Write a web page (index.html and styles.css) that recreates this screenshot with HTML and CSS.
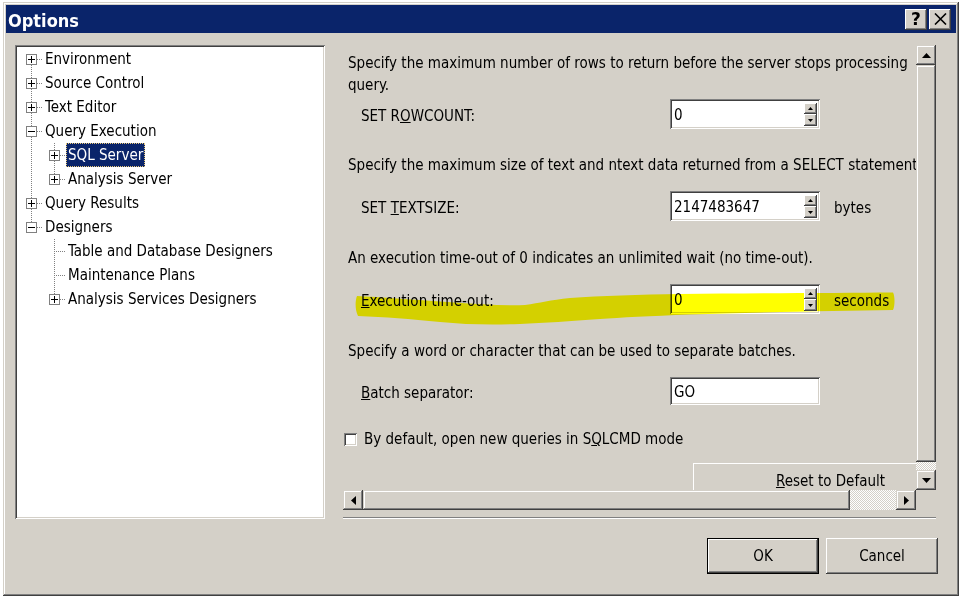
FILE: index.html
```html
<!DOCTYPE html>
<html lang="en">
<head>
    <meta charset="utf-8">
    <title>Options</title>
    <link rel="stylesheet" href="styles.css">
</head>
<body>
    <div class="window">
        <div class="titlebar">
            <span class="title">Options</span>
            <button class="caption-btn help">?</button>
            <button class="caption-btn close">
                <svg width="13" height="12" viewBox="0 0 13 12"><path d="M1 0.5 L12 11.5 M12 0.5 L1 11.5" stroke="#000" stroke-width="1.6"/></svg>
            </button>
        </div>

        <div class="dialog-body">
            <div class="main">
                <div class="tree">
                    <div class="tree-row">
                        <span class="node first"><span class="expander plus"></span></span>
                        <span class="label">Environment</span>
                    </div>
                    <div class="tree-row">
                        <span class="node mid"><span class="expander plus"></span></span>
                        <span class="label">Source Control</span>
                    </div>
                    <div class="tree-row">
                        <span class="node mid"><span class="expander plus"></span></span>
                        <span class="label">Text Editor</span>
                    </div>
                    <div class="tree-row">
                        <span class="node mid"><span class="expander minus"></span></span>
                        <span class="label">Query Execution</span>
                    </div>
                    <div class="tree-row">
                        <span class="guide line"></span>
                        <span class="node mid"><span class="expander plus"></span></span>
                        <span class="label selected">SQL Server</span>
                    </div>
                    <div class="tree-row">
                        <span class="guide line"></span>
                        <span class="node last"><span class="expander plus"></span></span>
                        <span class="label">Analysis Server</span>
                    </div>
                    <div class="tree-row">
                        <span class="node mid"><span class="expander plus"></span></span>
                        <span class="label">Query Results</span>
                    </div>
                    <div class="tree-row">
                        <span class="node last"><span class="expander minus"></span></span>
                        <span class="label">Designers</span>
                    </div>
                    <div class="tree-row">
                        <span class="guide"></span>
                        <span class="node mid"></span>
                        <span class="label">Table and Database Designers</span>
                    </div>
                    <div class="tree-row">
                        <span class="guide"></span>
                        <span class="node mid"></span>
                        <span class="label">Maintenance Plans</span>
                    </div>
                    <div class="tree-row">
                        <span class="guide"></span>
                        <span class="node last"><span class="expander plus"></span></span>
                        <span class="label">Analysis Services Designers</span>
                    </div>
                </div>

                <div class="pane">
                    <div class="pane-view">
                        <div class="pane-content">
                            <p class="desc">Specify the maximum number of rows to return before the server stops processing<br>query.</p>
                            <div class="setting-row first">
                                <span class="setting-label">SET R<u>O</u>WCOUNT:</span>
                                <div class="field spin">
                                    <span class="value">0</span>
                                    <div class="spin-buttons">
                                        <span class="spin-btn"><svg width="5" height="3"><polygon points="0,3 5,3 2.5,0"/></svg></span>
                                        <span class="spin-btn"><svg width="5" height="3"><polygon points="0,0 5,0 2.5,3"/></svg></span>
                                    </div>
                                </div>
                            </div>

                            <p class="desc">Specify the maximum size of text and ntext data returned from a SELECT statement.</p>
                            <div class="setting-row">
                                <span class="setting-label">SET <u>T</u>EXTSIZE:</span>
                                <div class="field spin">
                                    <span class="value">2147483647</span>
                                    <div class="spin-buttons">
                                        <span class="spin-btn"><svg width="5" height="3"><polygon points="0,3 5,3 2.5,0"/></svg></span>
                                        <span class="spin-btn"><svg width="5" height="3"><polygon points="0,0 5,0 2.5,3"/></svg></span>
                                    </div>
                                </div>
                                <span class="unit">bytes</span>
                            </div>

                            <p class="desc third">An execution time-out of 0 indicates an unlimited wait (no time-out).</p>
                            <div class="setting-row">
                                <span class="setting-label"><u>E</u>xecution time-out:</span>
                                <div class="field spin">
                                    <span class="value">0</span>
                                    <div class="spin-buttons">
                                        <span class="spin-btn"><svg width="5" height="3"><polygon points="0,3 5,3 2.5,0"/></svg></span>
                                        <span class="spin-btn"><svg width="5" height="3"><polygon points="0,0 5,0 2.5,3"/></svg></span>
                                    </div>
                                </div>
                                <span class="unit">seconds</span>
                            </div>

                            <p class="desc fourth">Specify a word or character that can be used to separate batches.</p>
                            <div class="setting-row short">
                                <span class="setting-label"><u>B</u>atch separator:</span>
                                <div class="field text">
                                    <span class="value">GO</span>
                                </div>
                            </div>

                            <label class="check-row">
                                <span class="checkbox"></span>
                                <span>By default, open new queries in S<u>Q</u>LCMD mode</span>
                            </label>

                            <button class="btn reset"><u>R</u>eset to Default</button>

                            <svg class="marker" width="573" height="445" viewBox="343 45 573 445">
                                <path d="M357,296 C380,297 415,300 455,302.5 C480,304 505,306 525,305 C540,303 550,300 570,298 C600,296 640,294.5 680,294 C760,293 840,293 893,292.5 C895,296 895,306 893,310 C840,311 760,312 690,314.5 C650,316 620,317.5 600,319 C570,321 545,323 520,324 C490,325 465,324.5 440,322 C410,319 385,317 358,316 C355,310 355,301 357,296 Z" fill="#ffff00"/>
                            </svg>
                        </div>

                        <div class="vscroll">
                            <span class="sb-btn"><svg width="9" height="5"><polygon points="0,5 9,5 4.5,0"/></svg></span>
                            <span class="sb-thumb"></span>
                            <span class="sb-track"></span>
                            <span class="sb-btn"><svg width="9" height="5"><polygon points="0,0 9,0 4.5,5"/></svg></span>
                        </div>

                        <div class="hscroll">
                            <span class="sb-btn"><svg width="5" height="9"><polygon points="5,0 5,9 0,4.5"/></svg></span>
                            <span class="sb-thumb"></span>
                            <span class="sb-track"></span>
                            <span class="sb-btn"><svg width="5" height="9"><polygon points="0,0 0,9 5,4.5"/></svg></span>
                        </div>
                        <div class="corner"></div>
                    </div>
                    <div class="separator"></div>
                </div>
            </div>

            <div class="footer">
                <button class="btn default">OK</button>
                <button class="btn">Cancel</button>
            </div>
        </div>
    </div>
</body>
</html>
```

FILE: styles.css
```css
body {
    margin: 0;
    padding: 2px 0 0 3px;
    width: 960px;
    height: 597px;
    box-sizing: border-box;
    overflow: hidden;
    background: #fff;
    font-family: "DejaVu Sans Condensed", "DejaVu Sans", sans-serif;
    font-stretch: semi-condensed;
    font-size: 15px;
    color: #000;
}

button {
    font: inherit;
    color: #000;
    border: none;
    padding: 0;
    cursor: default;
}

/* window frame */

.window {
    width: 956px;
    height: 594px;
    box-sizing: border-box;
    padding: 3px;
    background: #d4d0c8;
    box-shadow: inset -1px -1px #404040, inset 1px 1px #d4d0c8, inset -2px -2px #808080, inset 2px 2px #fff;
    display: flex;
    flex-direction: column;
}

.titlebar {
    height: 28px;
    flex: none;
    box-sizing: border-box;
    background: #0a246a;
    display: flex;
    align-items: center;
    gap: 2px;
    padding: 0 5px 0 2px;
}

.title {
    flex: 1;
    color: #fff;
    font-weight: bold;
    font-size: 18px;
    padding-top: 2px;
}

.caption-btn {
    width: 22px;
    height: 21px;
    background: #d4d0c8;
    box-shadow: inset -1px -1px #404040, inset 1px 1px #fff, inset -2px -2px #808080;
    display: flex;
    align-items: center;
    justify-content: center;
}

.caption-btn.help {
    font-family: "DejaVu Sans", sans-serif;
    font-stretch: normal;
    font-weight: bold;
    font-size: 17px;
    padding-bottom: 1px;
}

.dialog-body {
    flex: 1;
    padding: 12px 20px 0 9px;
}

.main {
    display: flex;
    gap: 18px;
    height: 474px;
}

/* tree */

.tree {
    width: 310px;
    box-sizing: border-box;
    padding: 2px 2px 2px 5px;
    background: #fff;
    box-shadow: inset 1px 1px #808080, inset -1px -1px #fff, inset 2px 2px #404040, inset -2px -2px #d4d0c8;
}

.tree-row {
    display: flex;
    height: 24px;
}

.guide,
.node {
    width: 23px;
    height: 24px;
    flex: none;
    background-repeat: no-repeat;
}

.guide.line {
    background-image: repeating-linear-gradient(to bottom, #808080 0 1px, transparent 1px 2px);
    background-size: 1px 24px;
    background-position: 11px 0;
}

.node.mid {
    background-image:
        repeating-linear-gradient(to bottom, #808080 0 1px, transparent 1px 2px),
        repeating-linear-gradient(to right, #808080 0 1px, transparent 1px 2px);
    background-size: 1px 24px, 12px 1px;
    background-position: 11px 0, 11px 12px;
}

.node.first {
    background-image:
        repeating-linear-gradient(to bottom, #808080 0 1px, transparent 1px 2px),
        repeating-linear-gradient(to right, #808080 0 1px, transparent 1px 2px);
    background-size: 1px 12px, 12px 1px;
    background-position: 11px 12px, 11px 12px;
}

.node.last {
    background-image:
        repeating-linear-gradient(to bottom, #808080 0 1px, transparent 1px 2px),
        repeating-linear-gradient(to right, #808080 0 1px, transparent 1px 2px);
    background-size: 1px 12px, 12px 1px;
    background-position: 11px 0, 11px 12px;
}

.expander {
    display: block;
    width: 11px;
    height: 11px;
    box-sizing: border-box;
    margin: 7px 0 0 6px;
    border: 1px solid #808080;
    background-color: #fff;
    background-repeat: no-repeat;
}

.expander.minus {
    background-image: linear-gradient(#000, #000);
    background-size: 7px 1px;
    background-position: 1px 4px;
}

.expander.plus {
    background-image: linear-gradient(#000, #000), linear-gradient(#000, #000);
    background-size: 7px 1px, 1px 7px;
    background-position: 1px 4px, 4px 1px;
}

.label {
    line-height: 23px;
    height: 22px;
    padding: 0 1px;
    border: 1px solid transparent;
    white-space: nowrap;
}

.label.selected {
    background: #0a246a;
    color: #fff;
    border: 1px dotted #e8c878;
}

/* right pane */

.pane {
    width: 593px;
    display: flex;
    flex-direction: column;
}

.pane-view {
    display: grid;
    grid-template-columns: 573px 20px;
    grid-template-rows: 445px 20px;
}

.pane-content {
    position: relative;
    overflow: hidden;
    padding: 7px 0 0 5px;
    white-space: nowrap;
}

.desc {
    margin: 25px 0 0;
    line-height: 22px;
}

.pane-content .desc:first-child {
    margin-top: 0;
}

.desc.third,
.desc.fourth {
    margin-top: 26px;
}

.setting-row {
    display: flex;
    align-items: center;
    height: 30px;
    margin-top: 15px;
}

.setting-row.first {
    margin-top: 3px;
}

.setting-row.short {
    height: 28px;
}

.setting-label {
    width: 309px;
    margin-left: 13px;
    padding-top: 3px;
}

.field {
    width: 150px;
    height: 100%;
    box-sizing: border-box;
    background: #fff;
    box-shadow: inset 1px 1px #808080, inset -1px -1px #fff, inset 2px 2px #404040, inset -2px -2px #d4d0c8;
    display: flex;
    align-items: center;
    padding: 2px 3px 1px 4px;
}

.field .value {
    flex: 1;
}

.spin-buttons {
    position: relative;
    z-index: 2;
    width: 13px;
    display: flex;
    flex-direction: column;
}

.spin-btn {
    height: 11px;
    background: #d4d0c8;
    box-shadow: inset -1px -1px #404040, inset 1px 1px #fff, inset -2px -2px #808080;
    display: flex;
    align-items: center;
    justify-content: center;
}

.spin-btn + .spin-btn {
    height: 12px;
}

.unit {
    margin-left: 14px;
    padding-top: 3px;
}

.check-row {
    display: flex;
    align-items: center;
    gap: 7px;
    margin: 23px 0 0 -4px;
    line-height: 22px;
}

.checkbox {
    width: 13px;
    height: 13px;
    background: #fff;
    box-shadow: inset 1px 1px #808080, inset -1px -1px #fff, inset 2px 2px #404040, inset -2px -2px #d4d0c8;
}

.marker {
    position: absolute;
    left: 0;
    top: 0;
    z-index: 1;
    mix-blend-mode: multiply;
    pointer-events: none;
}

/* scrollbars */

.vscroll,
.hscroll {
    display: flex;
}

.vscroll {
    flex-direction: column;
}

.sb-btn {
    flex: none;
    width: 20px;
    height: 20px;
    box-sizing: border-box;
    background: #d4d0c8;
    box-shadow: inset -1px -1px #404040, inset 1px 1px #d4d0c8, inset -2px -2px #808080, inset 2px 2px #fff;
    display: flex;
    align-items: center;
    justify-content: center;
}

.sb-thumb {
    background: #d4d0c8;
    box-shadow: inset -1px -1px #404040, inset 1px 1px #d4d0c8, inset -2px -2px #808080, inset 2px 2px #fff;
}

.vscroll .sb-thumb {
    height: 397px;
}

.hscroll .sb-thumb {
    width: 487px;
}

.sb-track {
    flex: 1;
    background: repeating-conic-gradient(#fff 0 25%, #d4d0c8 0 50%) 0 0 / 2px 2px;
}

.separator {
    margin-top: 7px;
    height: 2px;
    box-sizing: border-box;
    border-top: 1px solid #808080;
    border-bottom: 1px solid #fff;
}

/* buttons */

.btn {
    width: 112px;
    height: 36px;
    background: #d4d0c8;
    box-shadow: inset -1px -1px #404040, inset 1px 1px #fff, inset -2px -2px #808080, inset 2px 2px #d4d0c8;
}

.btn.default {
    box-shadow: inset 0 0 0 1px #000, inset -2px -2px #404040, inset 2px 2px #fff, inset -3px -3px #808080;
}

.btn.reset {
    display: block;
    width: 275px;
    height: 35px;
    margin: 13px 0 0 345px;
}

.footer {
    display: flex;
    justify-content: flex-end;
    gap: 7px;
    margin: 19px -2px 0 0;
}
```
